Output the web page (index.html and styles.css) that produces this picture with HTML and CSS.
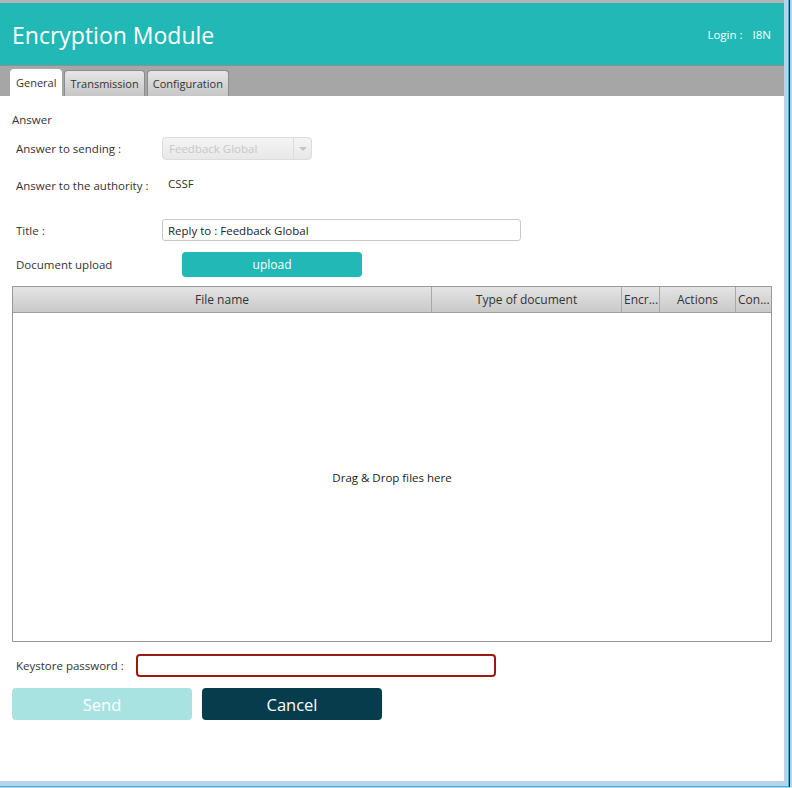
FILE: index.html
```html
<!DOCTYPE html>
<html lang="en">
<head>
    <meta charset="UTF-8">
    <title>Encryption Module</title>
    <link rel="stylesheet" href="styles.css">
</head>
<body>
    <div class="frame">
        <div class="app">
            <!-- Header -->
            <div class="header">
                <h1 class="title">Encryption Module</h1>
                <div class="login"><span>Login :</span><span class="user">I8N</span></div>
            </div>

            <!-- Tabs -->
            <div class="tab-bar">
                <div class="tab active">General</div>
                <div class="tab">Transmission</div>
                <div class="tab">Configuration</div>
            </div>

            <!-- General tab -->
            <div class="content">
                <div class="section-title">Answer</div>

                <div class="row row-sending">
                    <label class="label">Answer to sending :</label>
                    <div class="combo">
                        <span class="combo-text">Feedback Global</span>
                        <span class="combo-arrow"></span>
                    </div>
                </div>

                <div class="row row-authority">
                    <label class="label">Answer to the authority :</label>
                    <span class="value">CSSF</span>
                </div>

                <div class="row row-title">
                    <label class="label">Title :</label>
                    <input class="text-field" type="text" value="Reply to : Feedback Global">
                </div>

                <div class="row row-upload">
                    <label class="label">Document upload</label>
                    <button class="upload-btn">upload</button>
                </div>

                <div class="table">
                    <div class="table-head">
                        <div class="col col-name">File name</div>
                        <div class="col col-type">Type of document</div>
                        <div class="col col-encr">Encr...</div>
                        <div class="col col-actions">Actions</div>
                        <div class="col col-con">Con...</div>
                    </div>
                    <div class="table-body">Drag &amp; Drop files here</div>
                </div>

                <div class="row row-password">
                    <label class="label">Keystore password :</label>
                    <input class="password-field" type="password">
                </div>

                <div class="actions">
                    <button class="btn btn-send">Send</button>
                    <button class="btn btn-cancel">Cancel</button>
                </div>
            </div>
        </div>
    </div>
</body>
</html>
```

FILE: styles.css
```css
/* General Styles */
html, body {
    margin: 0;
    width: 792px;
    height: 788px;
    overflow: hidden;
    background-color: #b9d1ea;
}

body {
    font-family: "Open Sans", "Liberation Sans", sans-serif;
    font-size: 12px;
    color: #333;
}

/* Window frame */
.frame {
    width: 790px;
    height: 787px;
    border-right: 1px solid #1f1f1f;
    box-sizing: border-box;
    box-shadow: inset -1px -1px 0 #34b5df;
}

.app {
    width: 784px;
    height: 781px;
    background-color: #ffffff;
}

/* Header */
.header {
    display: flex;
    align-items: center;
    justify-content: space-between;
    height: 62px;
    padding: 0 13px 0 12px;
    border-top: 3px solid #b4b4b4;
    background-color: #22b8b6;
    color: #ffffff;
}

.title {
    margin: 0;
    padding-top: 2px;
    font-size: 23px;
    font-weight: normal;
}

.login {
    display: flex;
    gap: 10px;
    font-size: 11.5px;
}

/* Tabs */
.tab-bar {
    display: flex;
    align-items: flex-end;
    gap: 2px;
    height: 30px;
    padding-left: 10px;
    border-top: 1px solid #8f8f8f;
    background-color: #a6a6a6;
}

.tab {
    height: 25px;
    line-height: 25px;
    padding: 0 5px;
    border: 1px solid #8c8c8c;
    border-bottom: none;
    border-radius: 4px 4px 0 0;
    background: linear-gradient(to bottom, #e6e6e6, #c6c6c6);
    color: #333;
    font-size: 11px;
}

.tab.active {
    background: #ffffff;
    border-color: #ffffff;
    height: 26px;
}

/* Content */
.content {
    padding: 16px 0 0 12px;
}

.section-title {
    line-height: 16px;
    font-size: 11.5px;
}

.row {
    display: flex;
    align-items: center;
    margin-left: 4px;
}

.label {
    width: 146px;
    flex-shrink: 0;
    font-size: 11.5px;
}

.row-sending {
    height: 23px;
    margin-top: 9px;
}

.combo {
    display: flex;
    width: 150px;
    height: 23px;
    box-sizing: border-box;
    border: 1px solid #dcdcdc;
    border-radius: 4px;
    background: linear-gradient(to bottom, #f4f4f4, #e8e8e8);
}

.combo-text {
    flex: 1;
    padding-left: 6px;
    line-height: 21px;
    color: #c8c8c8;
    font-size: 11.5px;
}

.combo-arrow {
    width: 17px;
    border-left: 1px solid #dcdcdc;
    position: relative;
}

.combo-arrow::after {
    content: "";
    position: absolute;
    top: 9px;
    left: 5px;
    border-left: 4px solid transparent;
    border-right: 4px solid transparent;
    border-top: 4px solid #c4c4c4;
}

.row-authority {
    height: 20px;
    margin-top: 16px;
    align-items: flex-start;
}

.row-authority .label {
    padding-top: 2px;
}

.value {
    padding-left: 6px;
    font-size: 11.5px;
}

.row-title {
    height: 22px;
    margin-top: 23px;
}

.text-field {
    width: 359px;
    height: 22px;
    box-sizing: border-box;
    margin: 0;
    padding: 0 5px;
    border: 1px solid #c8c8c8;
    border-radius: 3px;
    font-family: inherit;
    font-size: 11.5px;
    color: #222;
}

.row-upload {
    height: 25px;
    margin-top: 11px;
}

.upload-btn {
    width: 180px;
    height: 25px;
    margin-left: 20px;
    border: none;
    border-radius: 4px;
    background-color: #22b8b6;
    color: #ffffff;
    font-family: inherit;
    font-size: 12px;
}

/* Table */
.table {
    width: 760px;
    height: 356px;
    margin-top: 9px;
    box-sizing: border-box;
    border: 1px solid #999999;
    display: flex;
    flex-direction: column;
}

.table-head {
    display: flex;
    height: 25px;
    border-bottom: 1px solid #a0a0a0;
    background: linear-gradient(to bottom, #e4e4e4, #c9c9c9);
}

.col {
    line-height: 25px;
    text-align: center;
    border-right: 1px solid #a8a8a8;
    box-sizing: border-box;
    overflow: hidden;
    white-space: nowrap;
    font-size: 12px;
    color: #333;
}

.col-name { width: 419px; }
.col-type { width: 190px; }
.col-encr { width: 38px; text-align: left; padding-left: 2px; }
.col-actions { width: 76px; }
.col-con { flex: 1; border-right: none; text-align: left; padding-left: 2px; }

.table-body {
    flex: 1;
    display: flex;
    align-items: center;
    justify-content: center;
    font-size: 11.5px;
    color: #222;
}

/* Password */
.row-password {
    height: 23px;
    margin-top: 12px;
}

.row-password .label {
    width: 120px;
}

.password-field {
    width: 360px;
    height: 23px;
    box-sizing: border-box;
    margin: 0;
    border: 2px solid #9c1b0f;
    border-radius: 4px;
}

/* Buttons */
.actions {
    display: flex;
    gap: 10px;
    margin-top: 11px;
}

.btn {
    width: 180px;
    height: 32px;
    border: none;
    border-radius: 4px;
    color: #ffffff;
    font-family: inherit;
    font-size: 16.5px;
}

.btn-send {
    background-color: #a8e3e2;
}

.btn-cancel {
    background-color: #063c4c;
}
```
